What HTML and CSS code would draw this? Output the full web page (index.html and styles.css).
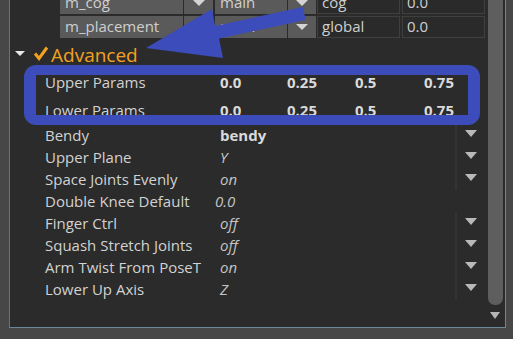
FILE: index.html
```html
<!DOCTYPE html>
<html>
<head>
<meta charset="utf-8">
<link rel="stylesheet" href="styles.css">
</head>
<body>
<div class="screen">
  <div class="panel">
    <div class="content">
      <div class="fields">
        <div class="frow">
          <div class="fld grey w-name">m_cog</div>
          <div class="abox w-a1"><span class="tri"></span></div>
          <div class="fld grey w-main">main</div>
          <div class="abox w-a2"><span class="tri"></span></div>
          <div class="fld dark w-c">cog</div>
          <div class="fld dark w-d">0.0</div>
        </div>
        <div class="frow">
          <div class="fld grey w-name">m_placement</div>
          <div class="abox w-a1"><span class="tri"></span></div>
          <div class="fld grey w-main">main</div>
          <div class="abox w-a2"><span class="tri"></span></div>
          <div class="fld dark w-c">global</div>
          <div class="fld dark w-d">0.0</div>
        </div>
      </div>

      <div class="adv">
        <span class="tri open"></span>
        <svg class="check" width="16" height="16" viewBox="0 0 16 16"><path d="M2 7.5 L6 12.5 L14 1.5" fill="none" stroke="#f2a21e" stroke-width="3"/></svg>
        <span class="adv-label">Advanced</span>
      </div>

      <div class="row prm">
        <span class="lbl">Upper Params</span>
        <span class="num c1">0.0</span><span class="num c2">0.25</span><span class="num c3">0.5</span><span class="num c4">0.75</span>
      </div>
      <div class="row prm">
        <span class="lbl">Lower Params</span>
        <span class="num c1">0.0</span><span class="num c2">0.25</span><span class="num c3">0.5</span><span class="num c4">0.75</span>
      </div>

      <div class="row"><span class="lbl">Bendy</span><span class="val bold">bendy</span><span class="ctl"><span class="tri dd"></span></span></div>
      <div class="row"><span class="lbl">Upper Plane</span><span class="val">Y</span><span class="ctl"><span class="tri dd"></span></span></div>
      <div class="row"><span class="lbl">Space Joints Evenly</span><span class="val">on</span><span class="ctl"><span class="tri dd"></span></span></div>
      <div class="row"><span class="lbl">Double Knee Default</span><span class="val shift">0.0</span></div>
      <div class="row"><span class="lbl">Finger Ctrl</span><span class="val">off</span><span class="ctl"><span class="tri dd"></span></span></div>
      <div class="row"><span class="lbl">Squash Stretch Joints</span><span class="val">off</span><span class="ctl"><span class="tri dd"></span></span></div>
      <div class="row"><span class="lbl">Arm Twist From PoseT</span><span class="val">on</span><span class="ctl"><span class="tri dd"></span></span></div>
      <div class="row"><span class="lbl">Lower Up Axis</span><span class="val">Z</span><span class="ctl"><span class="tri dd"></span></span></div>
    </div>
    <div class="scroll">
      <div class="thumb"></div>
      <span class="tri sdown"></span>
    </div>
  </div>

  <div class="highlight"></div>
  <svg class="pointer" width="170" height="70" viewBox="140 0 170 70">
    <polygon points="303,7 305.5,20 219,38.5 223,58 146,48 212,9 215,26" fill="#3c4dbb"/>
  </svg>
</div>
</body>
</html>
```

FILE: styles.css
```css
* { box-sizing: border-box; }
html, body { margin: 0; padding: 0; }
body {
  background: #474747;
  font-family: "Open Sans", "Noto Sans", sans-serif;
  font-size: 15px;
  color: #d2d2d2;
}
.screen {
  position: relative;
  width: 513px;
  height: 339px;
  overflow: hidden;
  background: #474747;
}
.panel {
  margin-left: 9px;
  width: 497px;
  height: 328px;
  display: flex;
  background: #2b2b2b;
  border-left: 1px solid #5e7585;
  border-right: 1px solid #6a8797;
  border-bottom: 1px solid #6a8797;
  overflow: hidden;
}
.content {
  width: 475px;
  display: flex;
  flex-direction: column;
}

/* top fields */
.fields {
  margin-top: -8px;
  padding-left: 50px;
  display: flex;
  flex-direction: column;
  gap: 2px;
}
.frow {
  display: flex;
  height: 22px;
}
.fld {
  height: 22px;
  line-height: 21px;
  padding-left: 5px;
  white-space: nowrap;
  overflow: hidden;
  color: #cfcfcf;
}
.grey { background: #5a5a5a; }
.dark { background: #2a2a2a; border: 1px solid #3f3f3f; padding-left: 4px; line-height: 19px; }
.abox {
  height: 22px;
  background: #5a5a5a;
  display: flex;
  align-items: center;
  justify-content: center;
}
.w-name { width: 123px; margin-right: 1px; }
.w-a1 { width: 29px; margin-right: 2px; }
.w-main { width: 72px; margin-right: 1px; }
.w-a2 { width: 28px; margin-right: 1px; }
.w-c { width: 83px; margin-right: 2px; }
.w-d { width: 83px; }

.tri {
  display: block;
  width: 0;
  height: 0;
  border-left: 6px solid transparent;
  border-right: 6px solid transparent;
  border-top: 6px solid #d4d4d4;
}

/* advanced header */
.adv {
  height: 26px;
  margin-top: 4px;
  display: flex;
  align-items: center;
  padding-left: 5px;
}
.tri.open {
  border-left-width: 5px;
  border-right-width: 5px;
  border-top: 5px solid #e8e8e8;
  margin-top: -3px;
}
.check { margin-left: 8px; margin-top: -2px; }
.adv-label {
  margin-left: 2px;
  font-size: 19px;
  color: #f2a21e;
  line-height: 26px;
}

/* rows */
.row {
  display: flex;
  align-items: center;
  height: 22px;
  line-height: 22px;
  white-space: nowrap;
}
.row.prm { height: 28px; }
.lbl {
  width: 210px;
  padding-left: 35px;
  color: #d2d2d2;
}
.num {
  font-weight: bold;
  color: #dadada;
}
.c1 { width: 67px; }
.c2 { width: 68px; }
.c3 { width: 69px; }
.c4 { width: 40px; }
.val {
  width: 235px;
  font-style: italic;
  color: #c4c4c4;
}
.val.bold { font-style: normal; font-weight: bold; color: #dadada; }
.val.shift { margin-left: -5px; }
.ctl {
  width: 30px;
  height: 22px;
  border-left: 2px solid #333333;
  display: flex;
  justify-content: center;
  padding-top: 6px;
}
.tri.dd {
  border-top: 7px solid #b9b9b9;
  border-left-width: 6.5px;
  border-right-width: 6.5px;
}

/* scrollbar */
.scroll {
  width: 20px;
  display: flex;
  flex-direction: column;
  align-items: center;
}
.thumb {
  width: 15px;
  height: 305px;
  margin-left: 1px;
  background: #5e5e5e;
  border-radius: 0 0 7px 7px;
}
.tri.sdown {
  margin-top: 7px;
  border-left-width: 5.5px;
  border-right-width: 5.5px;
  border-top: 7px solid #b5b5b5;
}

/* annotation overlays */
.highlight {
  position: absolute;
  left: 24px;
  top: 65px;
  width: 456px;
  height: 60px;
  border-style: solid;
  border-color: #3c4dbb;
  border-width: 10px 12px;
  border-radius: 12px;
}
.pointer {
  position: absolute;
  left: 140px;
  top: 0;
}
```
